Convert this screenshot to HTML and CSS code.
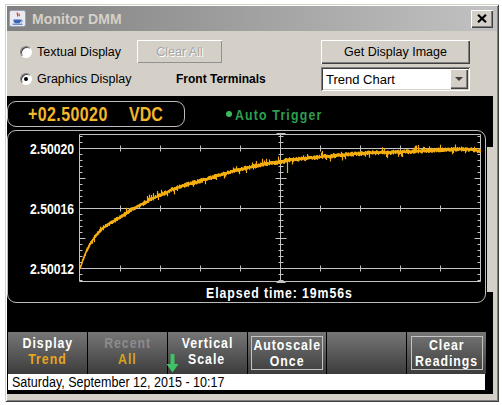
FILE: index.html
```html
<!DOCTYPE html>
<html>
<head>
<meta charset="utf-8">
<title>Monitor DMM</title>
<link rel="stylesheet" href="styles.css">
</head>
<body>
<div class="window">
  <div class="titlebar">
    <svg class="app-icon" width="17" height="17" viewBox="0 0 17 17">
      <rect x="0.5" y="0.5" width="16" height="16" rx="2" fill="#e9eaf2" stroke="#9aa0b8"/>
      <path d="M8.5 2.5c-1.5 1.5 1.2 2.2 0 4 M10.2 3.5c-1 1 .8 1.5 0 2.8" fill="none" stroke="#d8322a" stroke-width="1.1"/>
      <path d="M4.5 9.5h7.5v1.2c0 1.6-1.6 2.6-3.8 2.6s-3.7-1-3.7-2.6z" fill="#3c64b4"/>
      <path d="M12 10.2c1.6-.4 1.8 1.4 .2 1.8" fill="none" stroke="#3c64b4" stroke-width="0.9"/>
      <path d="M3.5 14.2h10" stroke="#3c64b4" stroke-width="1"/>
    </svg>
    <span class="title">Monitor DMM</span>
    <div class="close-btn"><svg width="10" height="9" viewBox="0 0 10 9"><path d="M1 0.8l8 7.4M9 0.8l-8 7.4" stroke="#000" stroke-width="2.2"/></svg></div>
  </div>
  <div class="content">
    <div class="controls">
      <div class="radio r1"><span class="radio-circle"></span>Textual Display</div>
      <div class="btn disabled clear-all">Clear All</div>
      <div class="btn get-image">Get Display Image</div>
      <div class="radio r2"><span class="radio-circle checked"></span>Graphics Display</div>
      <div class="terminals">Front Terminals</div>
      <div class="combo"><span class="combo-text">Trend Chart</span><span class="combo-arrow"><span class="tri"></span></span></div>
    </div>
    <div class="display">
      <div class="screen">
        <div class="status-row">
          <div class="readout"><span class="value"><span class="nx">+02.50020</span></span><span class="unit nx">VDC</span></div>
          <div class="trigger"><span class="led"></span><span class="nx">Auto Trigger</span></div>
        </div>
        <div class="chart-panel">
          <svg class="chart" width="477" height="153" viewBox="0 0 477 153">
            <g class="axis-labels">
              <text x="22" y="23" textLength="44" lengthAdjust="spacingAndGlyphs">2.50020</text>
              <text x="22" y="83" textLength="44" lengthAdjust="spacingAndGlyphs">2.50016</text>
              <text x="22" y="143" textLength="44" lengthAdjust="spacingAndGlyphs">2.50012</text>
            </g>
            <g id="grid" stroke="#c4c4c4" stroke-width="1" fill="none"></g>
            <path id="trace" fill="none" stroke="#f4ae10" stroke-width="1.2"/>
            <polyline id="trace-line" fill="none" stroke="#f4ae10" stroke-width="1.5"/>
          </svg>
          <div class="elapsed"><span class="nx">Elapsed time: 19m56s</span></div>
        </div>
        <div class="softkeys">
          <div class="key"><span class="l1 nx">Display</span><span class="l2 nx orange">Trend</span></div>
          <div class="key"><span class="l1 nx dim">Recent</span><span class="l2 nx orange-dim">All</span></div>
          <div class="key"><span class="l1 nx">Vertical</span><span class="l2 nx">Scale</span></div>
          <div class="key"><div class="boxed"><span class="l1 nx">Autoscale</span><span class="l2 nx">Once</span></div></div>
          <div class="key"></div>
          <div class="key"><div class="boxed"><span class="l1 nx">Clear</span><span class="l2 nx">Readings</span></div></div>
          <svg class="arrow" width="13" height="19" viewBox="0 0 13 19"><path d="M4.5 0h4v10h4l-6 8.5-6-8.5h4z" fill="#3fc266"/></svg>
        </div>
        <div class="datebar"><span class="nx date">Saturday, September 12, 2015 - 10:17</span></div>
      </div>
      <div class="side-strip"><div class="strip-top"></div><div class="strip-mid"></div><div class="strip-bot"></div></div>
    </div>
  </div>
</div>
<script src="script.js"></script>
</body>
</html>
```

FILE: styles.css
```css
* { box-sizing: border-box; }
html, body { margin: 0; padding: 0; }
body {
  background: #ffffff;
  width: 502px;
  height: 405px;
  overflow: hidden;
  font-family: "Liberation Sans", Arial, sans-serif;
}
.window {
  margin: 4px 0 0 5px;
  width: 494px;
  height: 398px;
  background: #d4d0c8;
  padding: 2px;
  box-shadow: inset 1px 1px 0 #d4d0c8, inset -1px -1px 0 #404040, inset 2px 2px 0 #ffffff, inset -2px -2px 0 #808080;
  display: flex;
  flex-direction: column;
}
.titlebar {
  height: 25px;
  flex: none;
  display: flex;
  align-items: center;
  background: linear-gradient(to right, #808080, #c2c2c2);
}
.app-icon { margin-left: 2px; flex: none; }
.title {
  margin-left: 6px;
  color: #d4d0c8;
  font-weight: bold;
  font-size: 14px;
  letter-spacing: 0.1px;
}
.close-btn {
  margin-left: auto;
  margin-right: 4px;
  width: 22px;
  height: 18px;
  background: #d4d0c8;
  box-shadow: inset 1px 1px 0 #ffffff, inset -1px -1px 0 #404040, inset -2px -2px 0 #808080;
  display: flex;
  align-items: center;
  justify-content: center;
}
.content { flex: 1; display: flex; flex-direction: column; }
.controls {
  height: 65px;
  flex: none;
  display: grid;
  grid-template-columns: 117px 85px 99px 149px;
  grid-template-rows: 24px 24px;
  row-gap: 3px;
  padding: 9px 0 0 13px;
  font-size: 12.5px;
  color: #000;
}
.radio { display: flex; align-items: center; gap: 5px; }
.r1 { grid-column: 1; grid-row: 1; }
.r2 { grid-column: 1; grid-row: 2; }
.radio-circle {
  width: 12px;
  height: 12px;
  border-radius: 50%;
  background: #ffffff;
  border: 1px solid;
  border-color: #808080 #ffffff #ffffff #808080;
  box-shadow: inset 1px 1px 0 #404040;
  position: relative;
  flex: none;
}
.radio-circle.checked::after {
  content: "";
  position: absolute;
  left: 3px;
  top: 3px;
  width: 4px;
  height: 4px;
  border-radius: 50%;
  background: #000;
}
.btn {
  background: #d4d0c8;
  box-shadow: inset 1px 1px 0 #ffffff, inset -1px -1px 0 #404040, inset -2px -2px 0 #808080;
  display: flex;
  align-items: center;
  justify-content: center;
  font-size: 12.5px;
}
.clear-all { grid-column: 2; grid-row: 1; height: 23px; }
.btn.disabled { color: #a6a6a6; text-shadow: 1px 1px 0 #ffffff; box-shadow: inset 1px 1px 0 #ffffff, inset -1px -1px 0 #909090; }
.get-image { grid-column: 4; grid-row: 1; }
.terminals {
  grid-column: 2 / 4;
  grid-row: 2;
  padding-left: 39px;
  font-weight: bold;
  font-size: 12px;
  display: flex;
  align-items: center;
}
.combo {
  grid-column: 4;
  grid-row: 2;
  background: #ffffff;
  box-shadow: inset 1px 1px 0 #808080, inset -1px -1px 0 #ffffff, inset 2px 2px 0 #404040, inset -2px -2px 0 #d4d0c8;
  display: flex;
  align-items: center;
  padding: 2px;
}
.combo-text { flex: 1; padding-left: 3px; font-size: 13px; }
.combo-arrow {
  width: 18px;
  height: 20px;
  background: #d4d0c8;
  box-shadow: inset 1px 1px 0 #ffffff, inset -1px -1px 0 #404040, inset -2px -2px 0 #808080;
  display: flex;
  align-items: center;
  justify-content: center;
}
.tri { width: 0; height: 0; border-left: 4px solid transparent; border-right: 4px solid transparent; border-top: 4px solid #404040; }

.display { height: 298px; flex: none; display: flex; margin-right: 4px; }
.screen {
  width: 480px;
  background: #000;
  display: flex;
  flex-direction: column;
  font-family: "Liberation Sans", Arial, sans-serif;
  font-weight: bold;
}
.nx {
  display: inline-block;
  white-space: nowrap;
  transform: scaleX(0.82);
  transform-origin: center;
}
.side-strip { flex: 1; display: flex; flex-direction: column; }
.strip-top { height: 51px; background: #000; }
.strip-mid { height: 145px; background: #d4d0c8; }
.strip-bot { flex: 1; background: #000; }

.status-row { display: flex; align-items: center; margin-top: 5px; height: 26px; }
.readout {
  width: 178px;
  height: 26px;
  border: 1px solid #bcbcbc;
  border-radius: 9px;
  color: #f4b62a;
  font-size: 19.5px;
  display: flex;
  align-items: center;
  padding-left: 20px;
}
.value { width: 101px; flex: none; }
.value .nx, .unit { transform-origin: left center; }
.value .nx { letter-spacing: 0.5px; }
.trigger {
  margin-left: 41px;
  color: #2e9e4e;
  font-size: 15px;
  letter-spacing: 1.45px;
  display: flex;
  align-items: center;
}
.trigger .nx { transform-origin: left center; }
.led { width: 6px; height: 6px; border-radius: 50%; background: #3cba5c; margin-right: 3px; flex: none; }

.chart-panel {
  margin-top: 3px;
  width: 479px;
  height: 173px;
  border: 1px solid #bcbcbc;
  border-radius: 9px;
  display: flex;
  flex-direction: column;
}
.chart { display: block; }
.axis-labels { fill: #ffffff; font-family: "Liberation Sans", Arial, sans-serif; font-size: 15px; font-weight: bold; }
.elapsed {
  margin-left: 71px;
  width: 401px;
  height: 18px;
  text-align: center;
  color: #ffffff;
  font-size: 15px;
  letter-spacing: 1.1px;
  line-height: 18px;
}

.softkeys {
  margin-top: 29px;
  height: 42px;
  display: grid;
  grid-template-columns: repeat(6, 1fr);
  column-gap: 1px;
  padding: 0 1px;
  background: #000;
  position: relative;
}
.key {
  background: linear-gradient(#767676, #5c5c5c 45%, #3c3c3c);
  display: flex;
  flex-direction: column;
  align-items: center;
  padding-top: 3px;
  color: #ffffff;
  font-size: 15px;
  line-height: 16px;
  letter-spacing: 1.2px;
  min-width: 0;
}
.boxed {
  margin-top: 1px;
  width: 72px;
  height: 34px;
  border: 1px solid #c4c4c4;
  display: flex;
  flex-direction: column;
  align-items: center;
}
.orange { color: #eaa51c; }
.orange-dim { color: #d6a21e; }
.dim { color: #8c8c8c; }
.arrow { position: absolute; left: 159px; top: 22px; }

.datebar {
  margin-left: 1px;
  width: 477px;
  height: 16px;
  background: #ffffff;
  color: #000;
  font-weight: normal;
  font-size: 15.3px;
  line-height: 16px;
  padding-left: 4px;
  white-space: nowrap;
  overflow: hidden;
}
.date { transform-origin: left center; }
```

FILE: script.js
```js
(function () {
  var ox = 8, oy = 131;
  var grid = document.getElementById('grid');
  var d = '';
  function h(y, x1, x2) { d += 'M' + x1 + ' ' + y + 'H' + x2; }
  function v(x, y1, y2) { d += 'M' + x + ' ' + y1 + 'V' + y2; }
  var L = 71.5, R = 472.5, T = 3.5, B = 150.5, C = 272.5;
  h(T, L, R); h(B, L, R); v(L, T, B); v(R, T, B); v(C, T - 1, B + 1);
  var gy = [17.5, 77.5, 137.5];
  gy.forEach(function (y) {
    h(y, L, R);
    for (var x = 112.5; x < R; x += 40) { if (Math.abs(x - C) > 1) v(x, y - 3, y + 3); }
  });
  for (var y = 5.5; y < B; y += 6) {
    var major = Math.abs(((y - 17.5) % 60 + 60) % 60 - 30) < 0.1;
    var len = major ? 6 : 3;
    h(y, L, L + len);
    h(y, R - len, R);
    h(y, C - (major ? 5 : 2), C + (major ? 5 : 2) + 1);
  }
  h(T - 1, C - 4, C + 5); h(B + 1, C - 4, C + 5);
  grid.innerHTML = '<path d="' + d + '"/>';

  var pts = [[80,267],[82,261],[84,256],[86,251],[88,247],[91,242],[95,236],[100,230],[105,226],[110,223],[115,220],[120,217],[125,214],[130,210],[140,205],[153,198],[167,192],[170,190],[185,185],[203,180],[220,175],[237,170],[255,166],[270,163],[281,162],[286,160],[300,159],[320,157],[340,155],[367,153],[403,152],[437,150],[460,149],[470,149.5],[480,151]];
  function base(x) {
    for (var i = 0; i < pts.length - 1; i++) {
      if (x >= pts[i][0] && x <= pts[i + 1][0]) {
        var t = (x - pts[i][0]) / (pts[i + 1][0] - pts[i][0]);
        return pts[i][1] + t * (pts[i + 1][1] - pts[i][1]);
      }
    }
    return pts[pts.length - 1][1];
  }
  var seed = 12345;
  function rnd() { seed = (seed * 1103515245 + 12345) % 2147483648; return seed / 2147483648; }
  var p = '', line = [];
  for (var x = 80; x <= 480; x++) {
    var b = base(x);
    var up = 1.0 + rnd() * 1.6, dn = 1.0 + rnd() * 1.6;
    if (rnd() < 0.09) up += 1.5 + rnd() * 2.2;
    if (rnd() < 0.07) dn += 1.5 + rnd() * 2.2;
    if (x === 287) dn = 13;
    var sx = x - ox + 0.5;
    p += 'M' + sx + ' ' + (b - up - oy).toFixed(1) + 'V' + (b + dn - oy).toFixed(1);
    line.push(sx + ',' + (b + (rnd() - 0.5) * 1.5 - oy).toFixed(1));
  }
  document.getElementById('trace').setAttribute('d', p);
  document.getElementById('trace-line').setAttribute('points', line.join(' '));
})();
```
